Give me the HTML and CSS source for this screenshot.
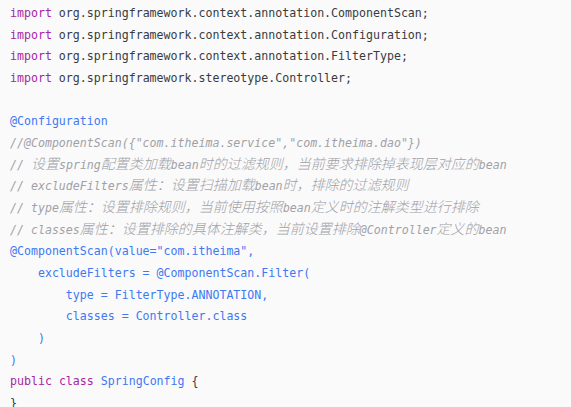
FILE: index.html
```html
<!DOCTYPE html>
<html lang="zh">
<head>
<meta charset="utf-8">
<link rel="stylesheet" href="styles.css">
</head>
<body>
<pre class="code"><code><span class="kw">import</span> org.springframework.context.annotation.ComponentScan;
<span class="kw">import</span> org.springframework.context.annotation.Configuration;
<span class="kw">import</span> org.springframework.context.annotation.FilterType;
<span class="kw">import</span> org.springframework.stereotype.Controller;

<span class="meta">@Configuration</span>
<span class="cm">//@ComponentScan({"com.itheima.service","com.itheima.dao"})</span>
<span class="cm">// <span class="zh">设置</span>spring<span class="zh">配置类加载</span>bean<span class="zh">时的过滤规则，当前要求排除掉表现层对应的</span>bean</span>
<span class="cm">// excludeFilters<span class="zh">属性：设置扫描加载</span>bean<span class="zh">时，排除的过滤规则</span></span>
<span class="cm">// type<span class="zh">属性：设置排除规则，当前使用按照</span>bean<span class="zh">定义时的注解类型进行排除</span></span>
<span class="cm">// classes<span class="zh">属性：设置排除的具体注解类，当前设置排除</span>@Controller<span class="zh">定义的</span>bean</span>
<span class="meta">@ComponentScan(value="com.itheima",
    excludeFilters = @ComponentScan.Filter(
        type = FilterType.ANNOTATION,
        classes = Controller.class
    )
)</span>
<span class="kw">public</span> <span class="kw">class</span> <span class="title">SpringConfig</span> {
}</code></pre>
</body>
</html>
```
FILE: styles.css
```css
html, body {
  margin: 0;
  padding: 0;
  background: #fafafa;
}

.code {
  margin: 0;
  padding: 3px 10px 0 10px;
  font-family: "DejaVu Sans Mono", "Liberation Mono", "Noto Sans CJK SC", monospace;
  font-size: 11.6px;
  line-height: 21.65px;
  color: #383a42;
  background: #fafafa;
  white-space: pre;
}

.kw { color: #a626a4; }
.meta { color: #4078f2; }
.title { color: #4078f2; }
.cm { color: #a0a1a7; font-style: italic; }

.zh {
  font-family: "Noto Sans CJK SC", sans-serif;
  font-size: 14px;
  font-weight: 300;
  line-height: 1;
}
```
